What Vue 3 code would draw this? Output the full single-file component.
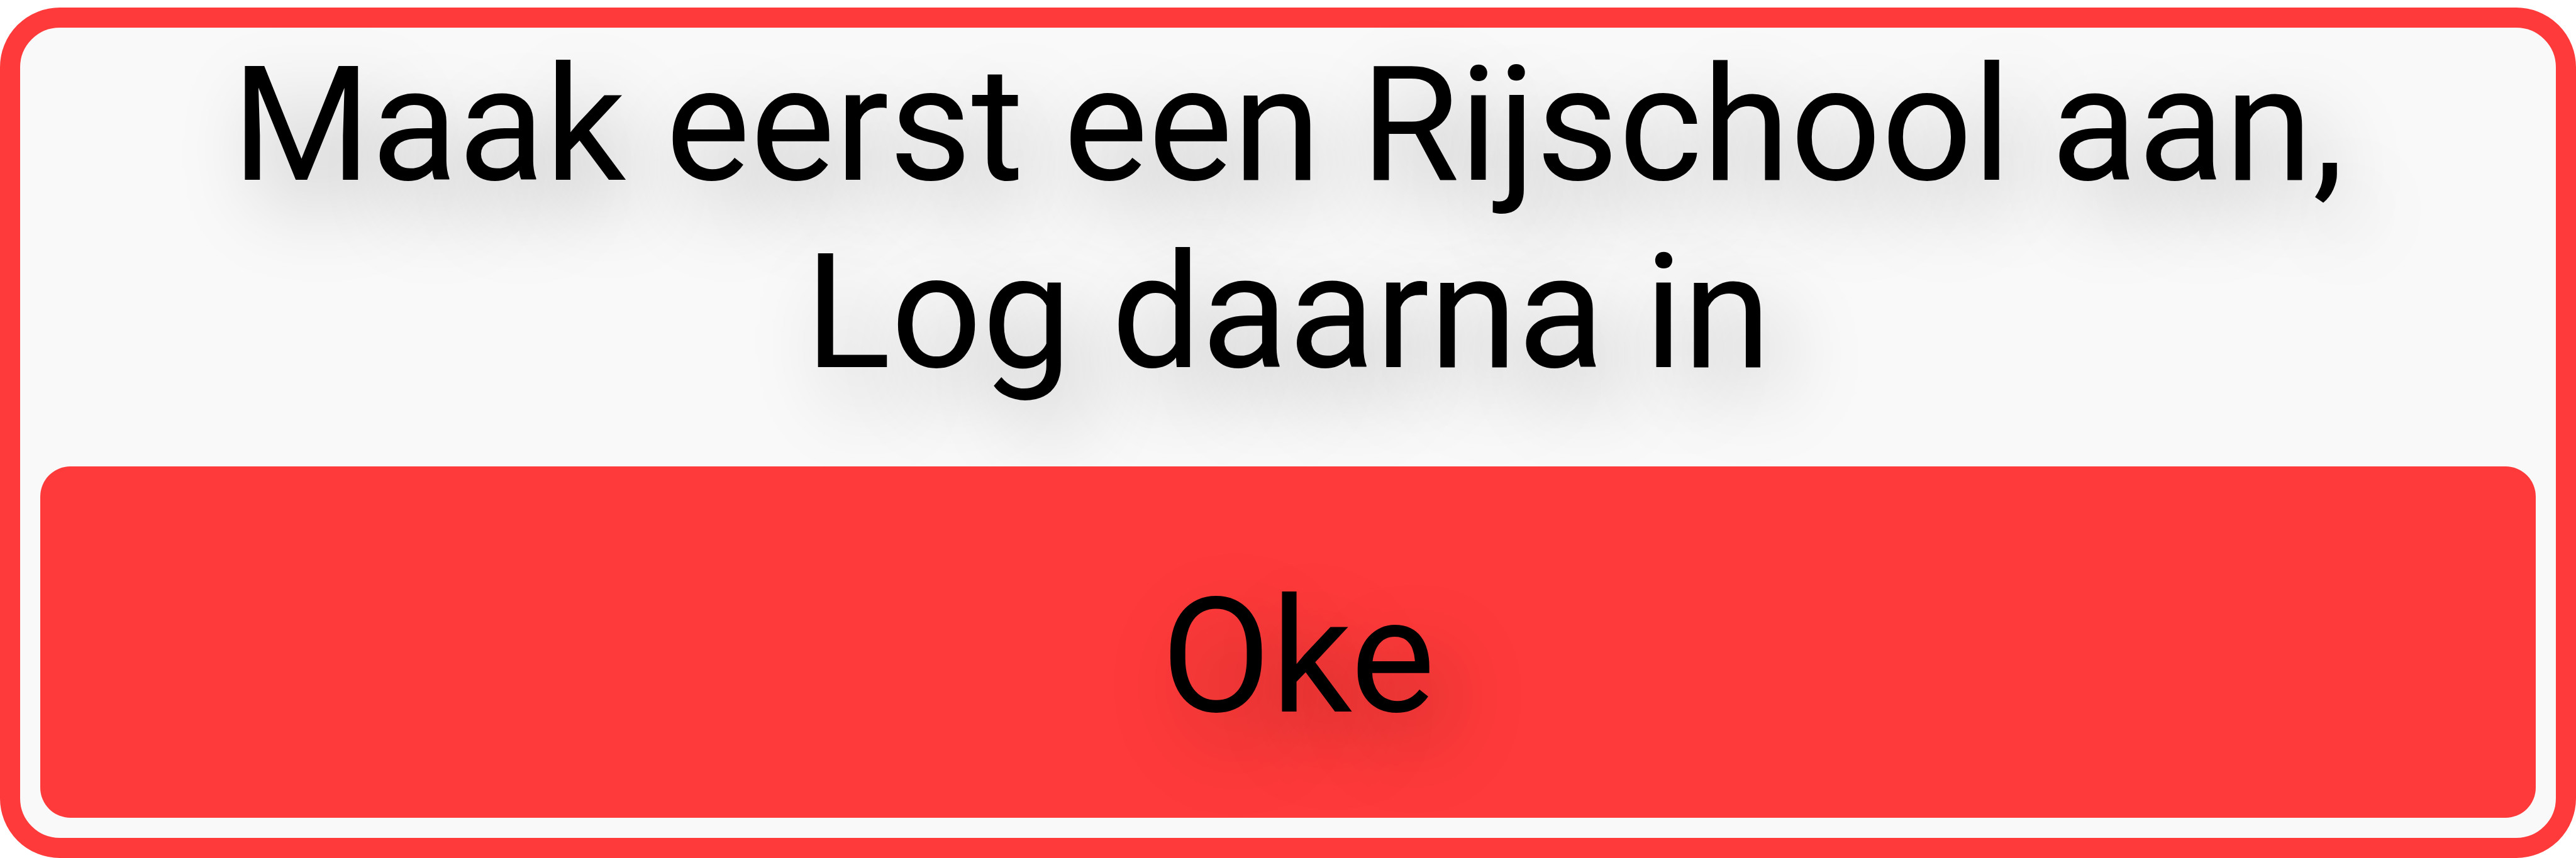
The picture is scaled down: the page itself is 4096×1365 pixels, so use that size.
<script setup>
import { ref } from 'vue'

const open = ref(true)
</script>

<template>
  <main class="page">
    <section v-if="open" class="dialog" role="alertdialog" aria-labelledby="message">
      <p id="message" class="message">Maak eerst een Rijschool aan,<br />Log daarna in</p>
      <button class="confirm" type="button" @click="open = false">Oke</button>
    </section>
  </main>
</template>

<style>
body {
  margin: 0;
  background: #ffffff;
}
</style>

<style scoped>
.page {
  padding-top: 12px;
}

.dialog {
  box-sizing: border-box;
  display: flex;
  flex-direction: column;
  gap: 96px;
  padding: 6px 32px 32px;
  border: 32px solid #ff3a3a;
  border-radius: 95px;
  background: #f9f9f9;
}

.message,
.confirm {
  margin: 0;
  color: #000000;
  font-family: Roboto, sans-serif;
  font-size: 254px;
  font-weight: 400;
  line-height: 298px;
  text-align: center;
  text-shadow: 32px 48px 128px rgba(0, 0, 0, 0.28);
}

.confirm {
  padding: 154px 0 107px 32px;
  border: 0;
  border-radius: 48px;
  background: #ff3a3a;
  cursor: pointer;
}
</style>
